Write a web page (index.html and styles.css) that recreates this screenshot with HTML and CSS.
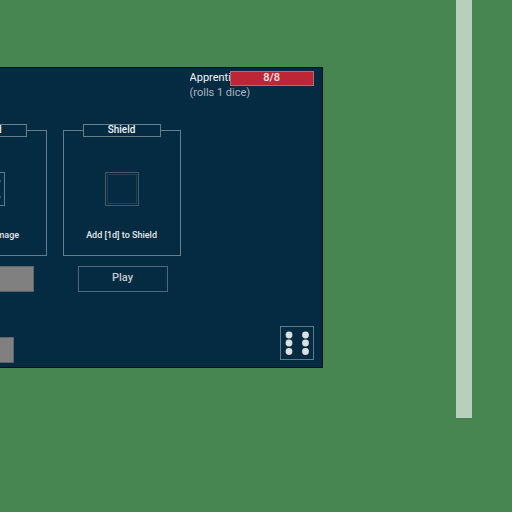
FILE: index.html
```
<!DOCTYPE html>
<html lang="en">
<head>
<meta charset="utf-8">
<title>Battle</title>
<link rel="stylesheet" href="styles.css">
</head>
<body>
<main class="panel">
  <div class="hand">
    <div class="cards">
      <section class="slot">
        <article class="card">
          <h2 class="card-title">Sword</h2>
          <svg class="die" viewBox="0 0 34 34" aria-hidden="true">
            <rect class="die-edge" x=".5" y=".5" width="33" height="33"/>
            <g class="faint-pips"><circle cx="28.5" cy="9" r="1.5"/><circle cx="28.5" cy="25" r="1.5"/></g>
          </svg>
          <p class="card-text">Do [1d] damage</p>
        </article>
        <button class="button disabled" type="button" aria-label="Play" disabled></button>
      </section>
      <section class="slot">
        <article class="card">
          <h2 class="card-title">Shield</h2>
          <svg class="die" viewBox="0 0 34 34" aria-hidden="true">
            <rect class="die-slot" x=".5" y=".5" width="33" height="33"/>
            <rect class="die-inner" x="2.5" y="2.5" width="29" height="29"/>
          </svg>
          <p class="card-text">Add [1d] to Shield</p>
        </article>
        <button class="button" type="button">Play</button>
      </section>
    </div>
    <button class="button disabled end-turn" type="button" aria-label="End turn" disabled></button>
  </div>
  <aside class="side">
    <header>
      <div class="status">
        <span class="name">Apprenti</span>
        <span class="health">8/8</span>
      </div>
      <p class="note">(rolls 1 dice)</p>
    </header>
    <svg class="die pool" viewBox="0 0 34 34" role="img" aria-label="Six">
      <rect class="die-edge" x=".5" y=".5" width="33" height="33"/>
      <g class="pips">
        <circle cx="9" cy="9" r="3.4"/><circle cx="9" cy="17" r="3.4"/><circle cx="9" cy="25.5" r="3.4"/>
        <circle cx="25.5" cy="9" r="3.4"/><circle cx="25.5" cy="17" r="3.4"/><circle cx="25.5" cy="25.5" r="3.4"/>
      </g>
    </svg>
  </aside>
</main>
<div class="track"></div>
</body>
</html>
```
FILE: styles.css
```
* { box-sizing: border-box; }

body {
  margin: 0;
  min-height: 100vh;
  display: flex;
  justify-content: space-between;
  align-items: flex-start;
  overflow: hidden;
  background: #478551;
  color: #e4e8eb;
  font: 11px/14px Roboto, sans-serif;
}

h2, p { margin: 0; font-weight: 400; }

.panel {
  flex: 0 0 63%;
  margin-top: 67px;
  display: grid;
  grid-template-columns: minmax(0, 1fr) 124px;
  column-gap: 9px;
  padding-right: 8px;
  background: #052b43;
  border: 1px solid #02121c;
  border-left: 0;
}

.hand {
  overflow: hidden;
  padding: 56px 0 4px;
}

.cards {
  display: flex;
  justify-content: flex-end;
  gap: 16px;
}

.slot {
  flex: 0 0 118px;
  display: flex;
  flex-direction: column;
  align-items: center;
  gap: 10px;
  padding-top: 6px;
}

.slot .button { margin-left: 2px; }

.card {
  width: 100%;
  display: flex;
  flex-direction: column;
  align-items: center;
  padding-bottom: 13px;
  border: 1px solid #667f8d;
}

.card-title {
  width: 78px;
  height: 13px;
  margin-top: -7px;
  border: 1px solid #667f8d;
  background: #052b43;
  color: #f2f4f5;
  font-size: 10px;
  font-weight: 500;
  line-height: 10px;
  text-align: center;
}

.die {
  width: 34px;
  height: 34px;
  margin: 35px 0 22px;
  fill: none;
}

.die-edge { stroke: #627b88; }
.die-slot { stroke: #435a67; }
.die-inner { stroke: #273f4e; }
.faint-pips { fill: #3d5867; }
.pips { fill: #dedfe1; }

.card-text {
  font-size: 9px;
  line-height: 14px;
  font-weight: 500;
  white-space: nowrap;
}

.button {
  width: 90px;
  height: 26px;
  padding: 0 0 2px;
  border: 1px solid #50697a;
  background: none;
  color: #c2cad0;
  font: inherit;
  font-weight: 500;
}

.disabled {
  background: #808080;
  border-color: #5f6467;
}

.end-turn {
  display: block;
  width: 14px;
  margin-top: 45px;
  border-left: 0;
}

.side {
  display: flex;
  flex-direction: column;
  justify-content: space-between;
  align-items: flex-end;
  padding: 3px 0 7px;
}

header { width: 100%; }

.status { display: flex; }

.name {
  flex: 1;
  min-width: 0;
  overflow: hidden;
  color: #f2f4f5;
}

.health {
  flex: 0 0 84px;
  height: 15px;
  border: 1px solid #a56f7e;
  background: #be2635;
  color: #f2e8ea;
  font-weight: 500;
  line-height: 12px;
  text-align: center;
}

.note { color: #aab6be; }

.pool { margin: 0; }

.track {
  flex: 0 0 16px;
  height: 81.7vh;
  margin-right: 40px;
  background: #b7cfbc;
}
```
